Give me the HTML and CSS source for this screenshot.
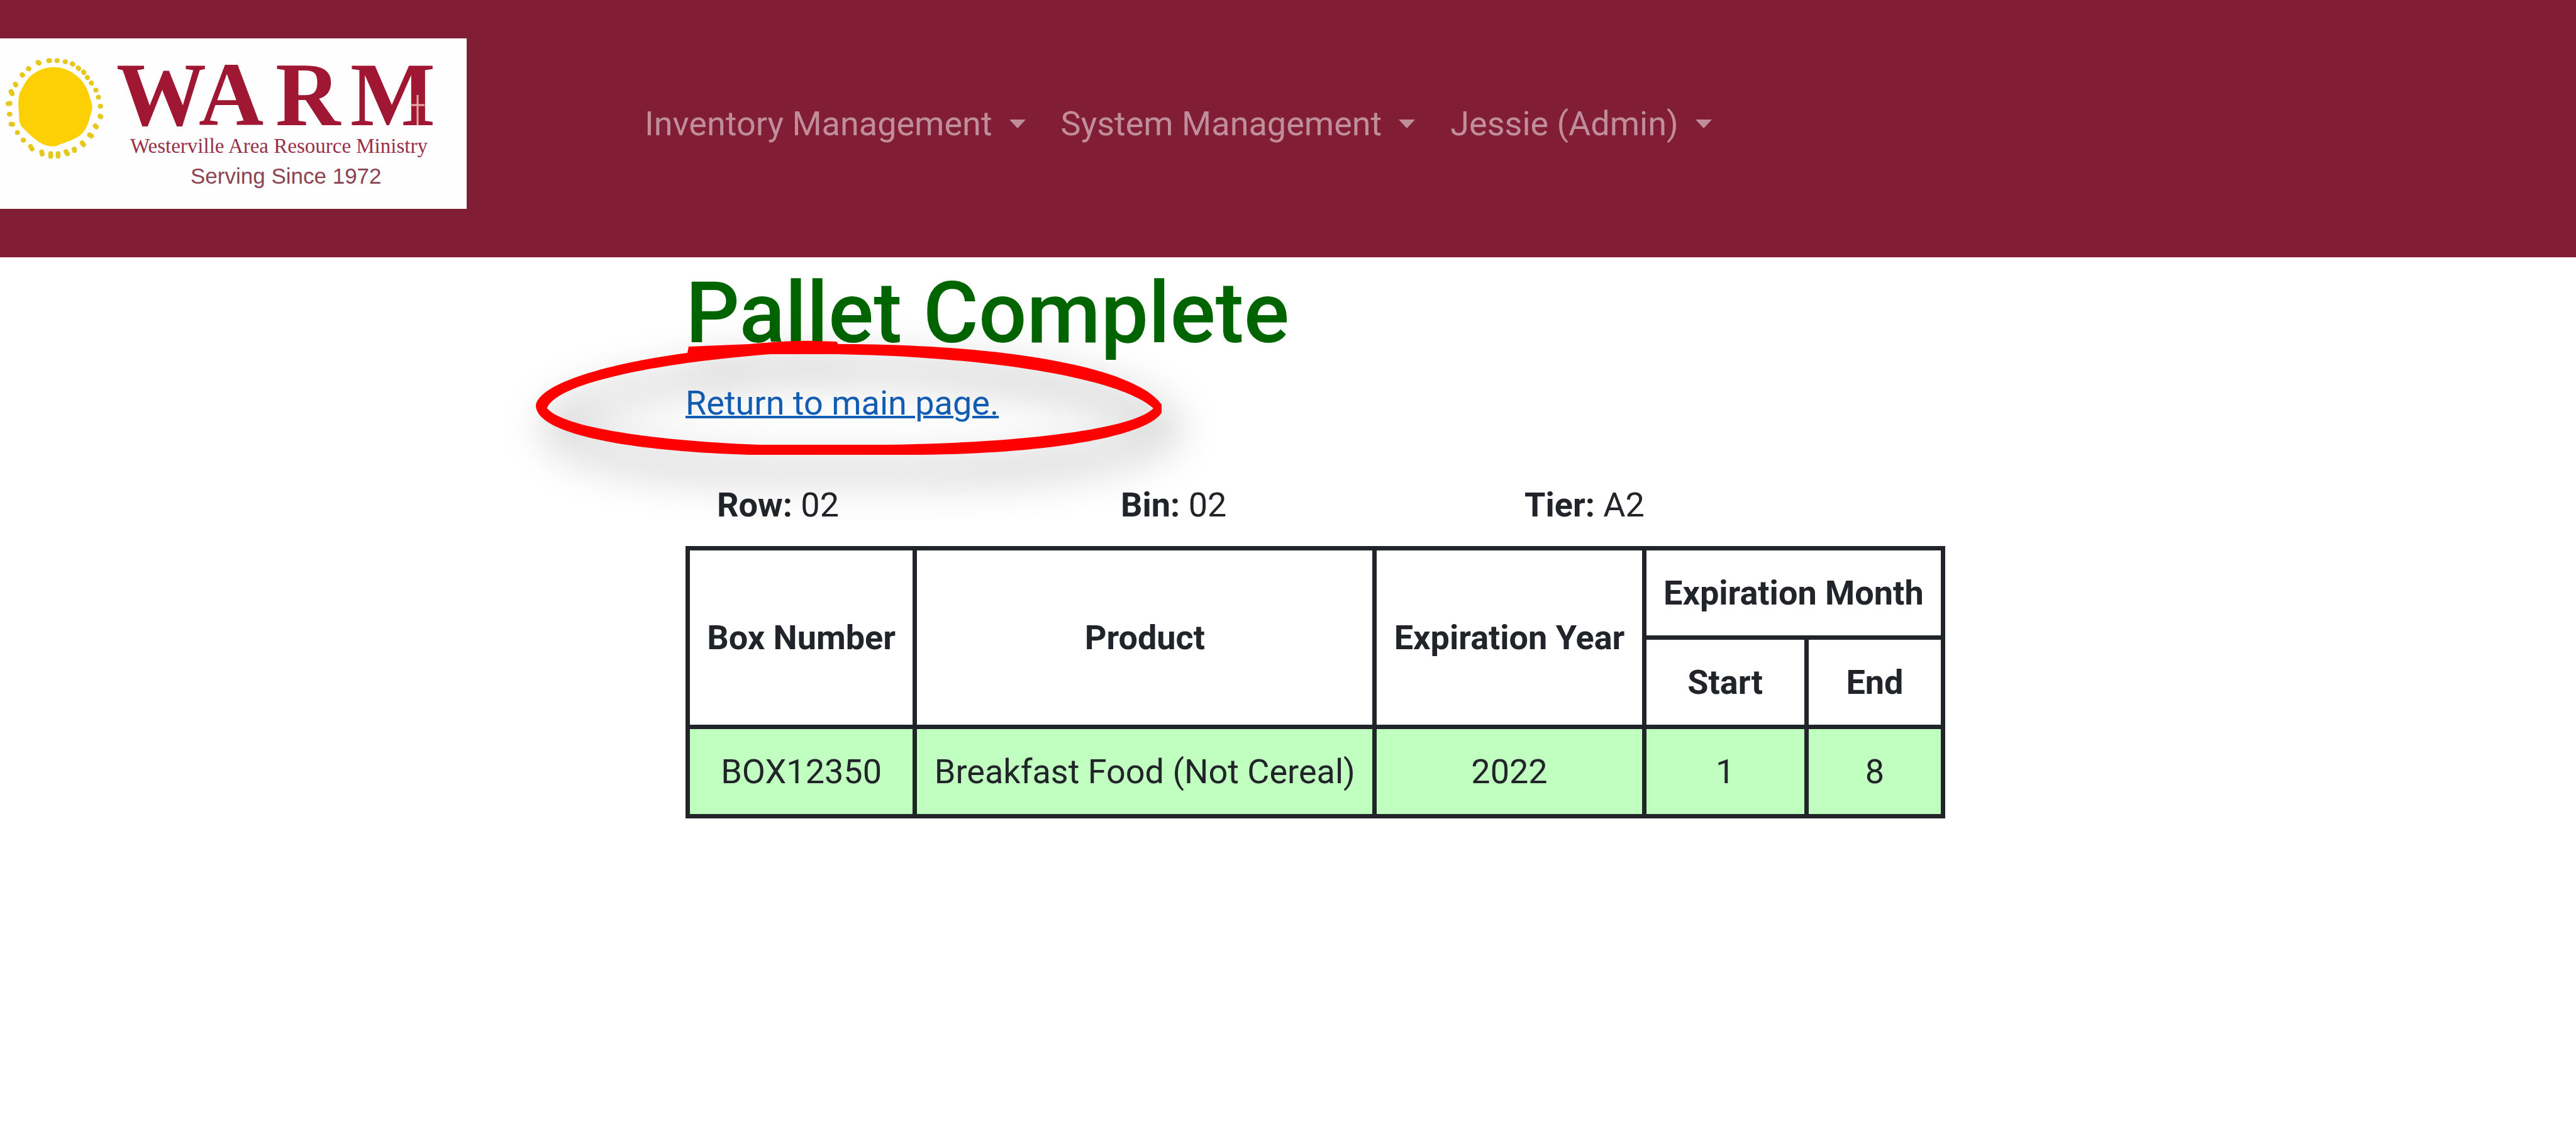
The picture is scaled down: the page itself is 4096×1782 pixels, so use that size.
FILE: index.html
```html
<!DOCTYPE html>
<html lang="en">
<head>
<meta charset="utf-8">
<title>Pallet Complete</title>
<link rel="stylesheet" href="styles.css">
</head>
<body>
<header class="navbar">
  <a class="brand" href="#" aria-label="WARM home">
    <svg class="logo" viewBox="0 0 742 271" role="img">
      <g transform="translate(0 7) scale(.2252)">
        <path class="sun" d="M380 172C450 172 520 205 570 260C615 310 628 360 645 420Q658 455 645 490C630 540 620 600 580 640C530 690 440 705 400 728Q350 738 300 715C250 690 200 640 150 590Q132 560 134 500C128 440 128 390 140 350C165 310 180 265 215 235C260 195 320 172 380 172Z"/>
        <path class="rays" d="M350 126h-6M402 126h2M460 134h2M510 148l5 4M552 178l4 4M590 206l2 4M616 244l2 2M645 284l1 1M676 334l2 0M694 384l2 0M708 448h2M706 518l6 4M672 586l8 8M632 650l14 8M580 706l10 14M524 750l2 10M466 768l10 16M410 782v18M358 782v20M294 770l4 16M216 732l10 18M164 688h2M122 634h2M78 574l12 2M66 504h4M58 430l12-2M78 344l8 16M108 292l4 6M156 226l4 4M200 182l4 2M268 138l8 6"/>
      </g>
      <text class="logo-name" x="185 316 438 557" y="138">WARM</text>
      <path class="logo-cross" d="M664 90V138M653 106H675"/>
      <text class="logo-full" x="207" y="182">Westerville Area Resource Ministry</text>
      <text class="logo-since" x="303" y="231">Serving Since 1972</text>
    </svg>
  </a>
  <nav class="menu">
    <button class="menu-item" type="button">Inventory Management <span class="caret"></span></button>
    <button class="menu-item" type="button">System Management <span class="caret"></span></button>
    <button class="menu-item" type="button">Jessie (Admin) <span class="caret"></span></button>
  </nav>
</header>
<main class="content">
  <h1 class="title">Pallet Complete</h1>
  <div class="return">
    <a class="return-link" href="#">Return to main page.</a>
    <svg class="ring" viewBox="0 0 1000 190" aria-hidden="true">
      <path fill-rule="evenodd" d="M242 20L244 10L340 6Q409 0 443 1L479 2L482 6C750 6 956 44 996 102V115C975 150 830 180 611 182H340C152 176 3 150 1 104C5 68 120 36 242 20Z M19 108C30 75 150 40 374 22H478C720 26 930 60 983 108C948 144 750 164 553 166H357C200 160 45 140 19 108Z"/>
    </svg>
  </div>
  <dl class="location">
    <div><dt>Row:</dt> <dd>02</dd></div>
    <div><dt>Bin:</dt> <dd>02</dd></div>
    <div><dt>Tier:</dt> <dd>A2</dd></div>
  </dl>
  <table class="boxes">
    <thead>
      <tr><th rowspan="2">Box Number</th><th rowspan="2">Product</th><th rowspan="2">Expiration Year</th><th colspan="2">Expiration Month</th></tr>
      <tr><th>Start</th><th>End</th></tr>
    </thead>
    <tbody>
      <tr><td>BOX12350</td><td>Breakfast Food (Not Cereal)</td><td>2022</td><td>1</td><td>8</td></tr>
    </tbody>
  </table>
</main>
</body>
</html>
```
FILE: styles.css
```css
body {
  margin: 0;
  background: #fff;
  color: #212529;
  font: 54px/81px Roboto, "Liberation Sans", sans-serif;
}

.navbar {
  display: flex;
  align-items: center;
  padding: 61px 0 77px;
  background: #811d34;
}

.brand {
  display: flex;
  width: 742px;
  background: #fefefe;
}

.logo { width: 100%; }
.sun { fill: #fdd006; }
.rays { fill: none; stroke: #e6c81c; stroke-width: 34; stroke-linecap: round; }
.logo-name { font: bold 143px "Liberation Serif", serif; fill: #9f1733; }
.logo-cross { fill: none; stroke: #e8a9a9; stroke-width: 3; }
.logo-full { font: 33px "Liberation Serif", serif; fill: #98304a; }
.logo-since { font: 35px "Liberation Sans", sans-serif; fill: #8c4352; }

.menu {
  display: flex;
  gap: 2px;
  margin-left: 256px;
}

.menu-item {
  display: flex;
  align-items: center;
  gap: 27px;
  padding: 27px;
  border: 0;
  background: none;
  color: #c08e9a;
  font: inherit;
}

.caret {
  border: solid transparent;
  border-width: 14px 13px 0;
  border-top-color: currentColor;
}

.content { padding: 8px 0 0 1090px; }

.title {
  margin: 0 0 21px;
  color: #006400;
  font-size: 135px;
  font-weight: 500;
  line-height: 162px;
}

.return { position: relative; }

.return-link {
  color: #1360b8;
  text-decoration-thickness: 4px;
}

.ring {
  position: absolute;
  left: -239px;
  top: -59px;
  width: 1000px;
  overflow: visible;
  fill: #f00;
  filter: drop-shadow(20px 32px 34px rgba(0, 0, 0, .4));
  pointer-events: none;
}

.location {
  display: grid;
  grid-template-columns: repeat(3, 642px);
  margin: 81px 0 25px;
  padding-left: 50px;
}

.location dt,
.location dd { display: inline; margin: 0; }
.location dt { font-weight: 700; }

.boxes {
  min-width: 2003px;
  border-collapse: collapse;
  text-align: center;
}

.boxes th,
.boxes td {
  padding: 27px;
  border: 7px solid #212529;
}

.boxes td { background: #c0ffc0; }
```
